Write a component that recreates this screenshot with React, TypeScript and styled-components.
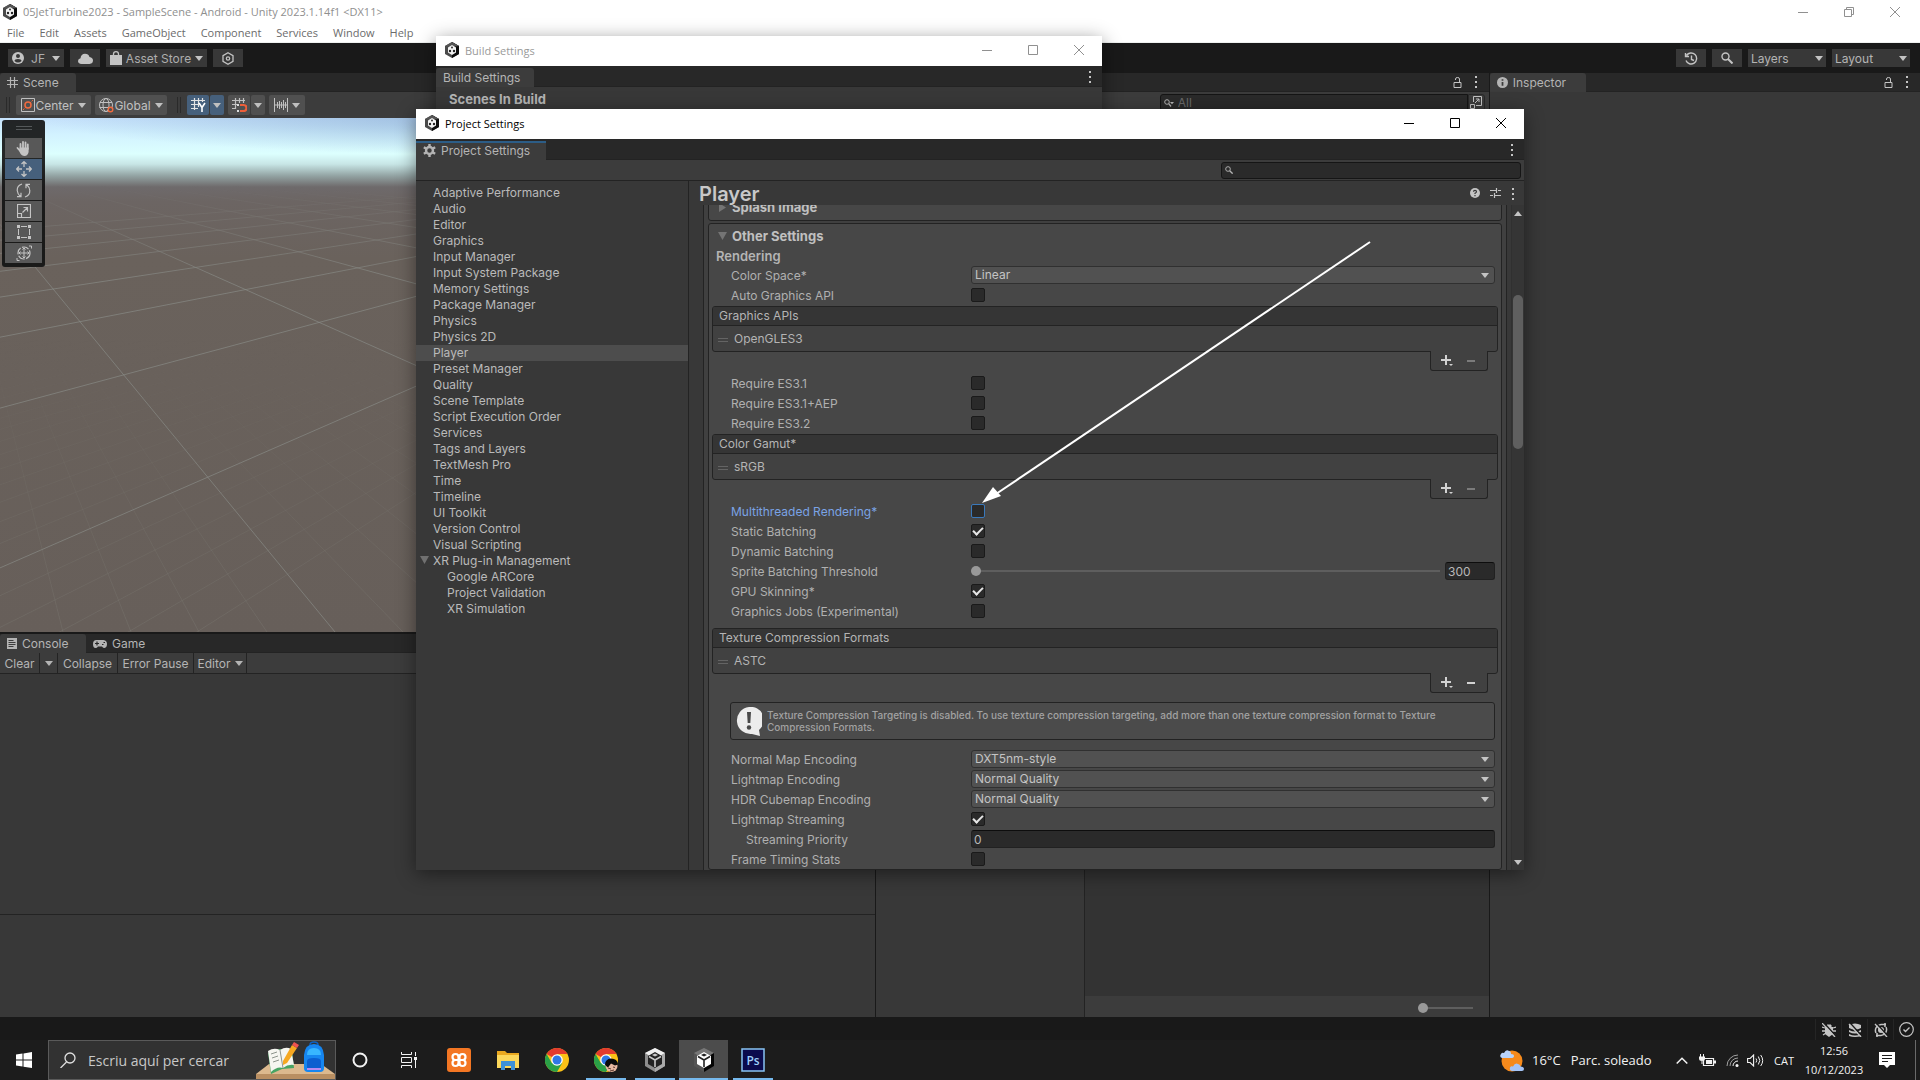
import React, { useId } from "react";
import styled, { createGlobalStyle, css } from "styled-components";

const ui = `Inter, Roboto, sans-serif`;
const win = `"Segoe UI", "Open Sans", "Noto Sans", sans-serif`;

const Global = createGlobalStyle`
  * { box-sizing: border-box; }
  html, body, #root { height: 100%; margin: 0; }
  body { overflow: hidden; background: #191919; font-family: ${ui}; font-size: 12px; color: #b4b4b4; }
  button, input, select { font: inherit; color: inherit; margin: 0; }
  button { border: 0; padding: 0; background: none; }
  ul, h1, h2, h3, p { margin: 0; padding: 0; font-size: inherit; font-weight: inherit; list-style: none; }
  svg { display: block; flex: none; }
`;

/* ---------- icons ---------- */

type IconProps = { w?: number; h?: number; box?: string; children: React.ReactNode };
const Svg = ({ w = 16, h = w, box, children }: IconProps) => (
  <svg width={w} height={h} viewBox={box ?? `0 0 ${w} ${h}`} fill="none" stroke="currentColor" aria-hidden="true">
    {children}
  </svg>
);

const Caret = ({ w = 8 }: { w?: number }) => (
  <Svg w={w} h={5} box="0 0 8 5"><path d="M0 0h8L4 5z" fill="currentColor" stroke="none" /></Svg>
);

const UnityBadge = () => (
  <Svg w={14} h={16} box="0 0 14 16">
    <path d="M7 0l7 4v8l-7 4-7-4V4z" fill="#4a4a4a" stroke="none" />
    <path d="M7 0l7 4v8l-7 4z" fill="#0c0c0c" stroke="none" />
    <path d="M7 0l7 4-7 1-7-1z" fill="#555" stroke="none" />
    <path d="M7 3l4 2.400v5.200l-4 2.400-4-2.400V5.400z" fill="#f4f4f4" stroke="none" />
    <circle cx="7" cy="5.400" r="1" fill="#333" stroke="none" />
    <circle cx="5" cy="9" r="1.200" fill="#222" stroke="none" />
    <circle cx="9" cy="9" r="1.200" fill="#222" stroke="none" />
  </Svg>
);

const UnityTask = ({ bright }: { bright?: boolean }) => (
  <Svg w={22} h={24} box="0 0 22 24">
    <path d="M11 0l10 5v13l-10 6-10-6V5z" fill={bright ? "#555" : "#8e8e8e"} stroke="none" />
    <path d="M11 0l10 5-10 6L1 5z" fill={bright ? "#777" : "#f0f0f0"} stroke="none" />
    <path d="M11 11l10-6v13l-10 6z" fill={bright ? "#050505" : "#aaa"} stroke="none" />
    <path d="M11 4l7 4v8l-7 4-7-4V8z" fill={bright ? "#fff" : "#222"} stroke="none" />
    <path d="M11 12v7M11 12l6-3.500M11 12L5 8.500" stroke={bright ? "#222" : "#c8c8c8"} strokeWidth="1.600" />
    <path d="M8 7l3-1.600L14 7l-3 1.600z" fill={bright ? "#222" : "#c8c8c8"} stroke="none" />
  </Svg>
);

const MinIcon = () => <Svg w={10}><path d="M0 5.500h10" /></Svg>;
const MaxIcon = () => <Svg w={10}><path d="M.5.5h9v9h-9z" /></Svg>;
const RestoreIcon = () => <Svg w={10}><path d="M.5 2.500h7v7h-7zM2.500 2.500v-2h7v7h-2" /></Svg>;
const CloseIcon = () => <Svg w={10}><path d="M0 0l10 10M10 0L0 10" /></Svg>;

const Kebab = () => (
  <Svg w={4} h={12}><path d="M1 0h2v2H1zM1 5h2v2H1zM1 10h2v2H1z" fill="currentColor" stroke="none" /></Svg>
);
const LockIcon = () => <Svg w={9} h={11}><path d="M1 5.500h7v5H1zM2.500 3V2Q2.500.5 4.500.5T6.500 2v3.500" /></Svg>;
const SearchIcon = ({ w = 8 }: { w?: number }) => (
  <Svg w={w} box="0 0 12 12"><circle cx="4.500" cy="4.500" r="3.500" strokeWidth="1.400" /><path d="M7 7l4.500 4.500" strokeWidth="2" /></Svg>
);
const SearchMenuIcon = () => (
  <Svg w={10} h={8}><circle cx="3" cy="3" r="2.300" /><path d="M4.700 4.700L7 7.500" strokeWidth="1.300" /><path d="M6 3h4L8 5.200z" fill="currentColor" stroke="none" /></Svg>
);
const UserIcon = () => (
  <Svg w={12}>
    <circle cx="6" cy="6" r="6" fill="currentColor" stroke="none" />
    <circle cx="6" cy="4" r="2" fill="#383838" stroke="none" />
    <path d="M2.500 9Q2.500 7 6 7t3.500 2Q8 10.500 6 10.500T2.500 9z" fill="#383838" stroke="none" />
  </Svg>
);
const CloudIcon = () => (
  <Svg w={15} h={11}><path d="M3.500 11Q0 10.500 0 8q0-2.200 2.500-2.800Q3 1 7 .8q3.500 0 4.500 3.200 3.500.5 3.500 3.500T11.500 11z" fill="currentColor" stroke="none" /></Svg>
);
const BagIcon = () => (
  <Svg w={12} h={14}><path d="M0 4h12v10H0z" fill="currentColor" stroke="none" /><path d="M3.500 6V3Q3.500.7 6 .7T8.500 3v3" strokeWidth="1.300" /></Svg>
);
const HexIcon = () => (
  <Svg w={12} h={13}><path d="M6 .8l5 2.800v5.800l-5 2.800-5-2.800V3.600z" strokeWidth="1.300" /><circle cx="6" cy="6.500" r="1.700" strokeWidth="1.200" /></Svg>
);
const HistoryIcon = () => (
  <Svg w={14} h={13}><path d="M2.500 3.500A5.500 5.500 0 1 1 2 8.500M1.500 1v3.500H5M7.500 3.500v4l2.500 1" strokeWidth="1.400" /></Svg>
);
const HashIcon = () => (
  <Svg w={11}><path d="M3.500 0v11M7.500 0v11M0 3.500h11M0 7.500h11" strokeWidth="1.200" /></Svg>
);
const PivotIcon = () => (
  <Svg w={14}><path d="M.5.5h13v13H.5z" /><circle cx="7" cy="7" r="3" stroke="#f26b3f" strokeWidth="1.500" /><path d="M2 12l3-3M9 5l3-3" stroke="#f26b3f" strokeDasharray="2 1" /></Svg>
);
const GlobeIcon = () => (
  <Svg w={15}><circle cx="7" cy="7" r="6.500" /><ellipse cx="7" cy="7" rx="3" ry="6.500" /><path d="M1 4.500h12M.5 9.500h10" /><circle cx="11.500" cy="11.500" r="2.300" fill="#505050" stroke="#f26b3f" strokeWidth="1.400" /></Svg>
);
const GridYIcon = () => (
  <Svg w={15} h={14}><path d="M3.500 0v12M7.500 0v9M11.500 0v4M0 2.500h14M0 6.500h8M0 10.500h7" stroke="#e4e4e4" strokeWidth="1.200" /><path d="M8 5l3 4.500L14 5M11 9.500V14" stroke="#fff" strokeWidth="1.600" /></Svg>
);
const SnapIcon = () => (
  <Svg w={15} h={14}><path d="M3.500 0v11M7.500 0v5M11.500 0v5M0 2.500h13M0 6.500h5M0 10.500h4" strokeWidth="1.200" /><path d="M8 7h3.500a2.500 2.500 0 0 1 0 6H8" stroke="#ee5f3a" strokeWidth="2.200" /><path d="M6 6v2M6 12v2" stroke="#ddd" strokeWidth="2" /></Svg>
);
const IncrementIcon = () => (
  <Svg w={14} h={14}><path d="M.5 0v14M13.500 0v14M3.500 4v6M5.500 3v8M7.500 4v6M9.500 2v10M11.500 4v6M1 7h12" /></Svg>
);
const InfoIcon = () => (
  <Svg w={11} box="0 0 10 10"><circle cx="5" cy="5" r="5" fill="currentColor" stroke="none" /><path d="M5 2v1.500M5 4.500V8" stroke="#3c3c3c" strokeWidth="1.600" /></Svg>
);
const HelpIcon = () => (
  <Svg w={10}><circle cx="5" cy="5" r="5" fill="currentColor" stroke="none" /><path d="M3.500 3.800Q3.500 2.400 5 2.400t1.500 1.400Q6.500 4.600 5 5.200v.8M5 7v1.200" stroke="#383838" strokeWidth="1.200" /></Svg>
);
const PresetIcon = () => (
  <Svg w={11} h={10}><path d="M0 2.500h6M8 2.500h3M6.500 0v5M0 7.500h3M5 7.500h6M4.500 5v5" strokeWidth="1.200" /></Svg>
);
const GearIcon = () => (
  <Svg w={13} box="0 0 14 14">
    <circle cx="7" cy="7" r="3.700" strokeWidth="2.600" />
    <path d="M7 0v3M7 11v3M.9 3.500l2.600 1.500M10.500 9l2.600 1.500M.9 10.500L3.500 9M10.500 5l2.600-1.500" strokeWidth="2.600" />
  </Svg>
);
const ConsoleIcon = () => (
  <Svg w={10} h={11}><path d="M0 0h10v11H0z" fill="currentColor" stroke="none" /><path d="M1.500 2.500h5M1.500 4.500h7M1.500 6.500h7M1.500 8.500h5" stroke="#3c3c3c" /></Svg>
);
const GamepadIcon = () => (
  <Svg w={14} h={8}><path d="M3.500 0h7Q14 .5 14 4t-2.500 4Q10 8 9 6.500H5Q4 8 2.500 8 0 8 0 4T3.500 0z" fill="currentColor" stroke="none" /><path d="M2 3.500h4M4 1.500v4M9 4.500h1.500M10.500 2.500H12" stroke="#282828" strokeWidth="1.200" /></Svg>
);
const PopOutIcon = () => <Svg w={12} h={13}><path d="M3.500 6V.5h8v9H6M.5 8.500h4v4h-4zM5 7l4-4M6 3h3v3" /></Svg>;

const HandIcon = () => (
  <Svg w={15}>
    <path d="M4.500 8V3M7 7V1M9.500 7V1.500M11.800 8V3.500M1.500 7L5 11" strokeWidth="1.800" strokeLinecap="round" />
    <path d="M3.600 6.500h9V11q-1 4-4 4-3.500 0-5-4z" fill="currentColor" stroke="none" />
  </Svg>
);
const MoveIcon = () => (
  <Svg w={16}><path d="M8 6V1M8 15v-5M6 8H1M15 8h-5M5.500 3L8 .7 10.500 3M5.500 13L8 15.300l2.500-2.300M3 5.500L.7 8 3 10.500M13 5.500L15.300 8 13 10.500" strokeWidth="1.300" /></Svg>
);
const RotateIcon = () => (
  <Svg w={15}><path d="M6 1Q1 2.500 1.200 7.500 1.500 11 4.500 13.500M1 13.700h4v-4M9 14q5-1.500 4.800-6.500Q13.500 4 10.500 1.500M14 1.300h-4v4" strokeWidth="1.200" /></Svg>
);
const ScaleIcon = () => <Svg w={14}><path d="M.5.5h13v13H.5zM.5 9.500h4v4M5.500 8.500L10.500 3.500M6.500 3.500h4v4" strokeWidth="1.200" /></Svg>;
const RectIcon = () => (
  <Svg w={14}><path d="M4 1.500h6M4 12.500h6M1.500 4v6M12.500 4v6" /><path d="M0 0h3v3H0zM11 0h3v3h-3zM0 11h3v3H0zM11 11h3v3h-3z" fill="currentColor" stroke="none" /></Svg>
);
const TransformIcon = () => (
  <Svg w={16}><circle cx="8" cy="8" r="6" strokeDasharray="7 1.500" strokeWidth="1.200" /><path d="M8 3v10M3 8h10M6.500 4.500L8 3l1.500 1.500M6.500 11.500L8 13l1.500-1.500M4.500 6.500L3 8l1.500 1.500M11.500 6.500L13 8l-1.500 1.500M13 1h2.500v2.500M1 13v2.500h2.500" /></Svg>
);

const NoticeIcon = () => (
  <Svg w={26} h={29}>
    <path d="M13 0a13 13 0 1 0 3 27l8 2-1-6A13 13 0 0 0 13 0z" fill="#ececec" stroke="none" />
    <path d="M11 5h4l-.7 11h-2.600z" fill="#484848" stroke="none" /><circle cx="13" cy="20.500" r="2.200" fill="#484848" stroke="none" />
  </Svg>
);
const PlusIcon = () => (
  <Svg w={12} h={11}><path d="M0 5h10M5 0v10" strokeWidth="2" /><path d="M8 9h4l-2 2z" fill="currentColor" stroke="none" /></Svg>
);
const MinusIcon = () => <Svg w={8} h={10}><path d="M0 5h8" strokeWidth="2" /></Svg>;

/* ---------- host application frame ---------- */

const Desktop = styled.div`
  position: relative;
  display: flex;
  flex-direction: column;
  height: 100vh;
  overflow: hidden;
`;

const TitleRow = styled.header`
  display: flex;
  align-items: center;
  height: 24px;
  padding: 0 2px 1px 3px;
  gap: 6px;
  background: #fff;
  color: #8f8f8f;
  font: 11px ${win};
`;

const WindowButtons = styled.div<{ $tone: string }>`
  display: flex;
  align-self: stretch;
  margin-left: auto;
  color: ${(p) => p.$tone};
  button { display: grid; place-items: center; width: 46px; }
`;

const MenuRow = styled.nav`
  display: flex;
  align-items: center;
  gap: 15px;
  height: 19px;
  padding: 0 7px 2px;
  background: #fff;
  border-bottom: 1px solid #eef0ef;
  color: #6b6b6b;
  font: 11px ${win};
`;

const MainBar = styled.div`
  display: flex;
  align-items: center;
  gap: 6px;
  height: 30px;
  padding: 0 10px 0 8px;
  background: #191919;
`;

const BarButton = styled.button<{ $w: number }>`
  display: flex;
  align-items: center;
  justify-content: center;
  gap: 4px;
  width: ${(p) => p.$w}px;
  height: 18px;
  background: #383838;
  color: #c4c4c4;
  span { color: #adadad; }
`;

const Spacer = styled.div`flex: 1;`;

const BarSelectBox = styled.label`
  position: relative;
  display: flex;
  align-items: center;
  width: 78px;
  height: 18px;
  background: #383838;
  color: #b4b4b4;
  select { appearance: none; width: 100%; padding: 0 3px; border: 0; background: none; }
  svg { position: absolute; right: 3px; top: 7px; color: #c4c4c4; pointer-events: none; }
`;

const Workspace = styled.main`
  flex: 1;
  display: grid;
  grid-template-columns: 875fr 612fr 430fr;
  gap: 1px;
  min-height: 0;
  background: #191919;
`;

const Column = styled.section`
  display: flex;
  flex-direction: column;
  min-width: 0;
  min-height: 0;
  background: #383838;
`;

const TabStrip = styled.div`
  display: flex;
  align-items: stretch;
  flex: none;
  height: 19px;
  background: #282828;
  border-bottom: 1px solid #232323;
`;

const Tab = styled.button<{ $active?: boolean; $w?: number; $focus?: boolean }>`
  display: flex;
  align-items: center;
  gap: 5px;
  width: ${(p) => (p.$w ? `${p.$w}px` : "auto")};
  height: 19px;
  padding: 0 7px;
  border-radius: 3px 3px 0 0;
  color: #b4b4b4;
  ${(p) => p.$active && css`background: #3c3c3c;`}
  ${(p) => p.$focus && css`border-radius: 0; background: linear-gradient(#2c5d87, #2c5d87) top / 100% 2px no-repeat #3c3c3c;`}
`;

const StripTools = styled.div`
  display: flex;
  align-items: center;
  gap: 12px;
  margin-left: auto;
  padding-right: 11px;
  color: #c4c4c4;
`;

/* ---------- scene ---------- */

const SceneToolbar = styled.div`
  display: flex;
  align-items: center;
  gap: 4px;
  flex: none;
  height: 26px;
  padding: 0 6px;
  background: #3c3c3c;
`;

const Grip = styled.span<{ $ml?: number }>`
  width: 4px;
  height: 16px;
  margin: 0 2px 0 ${(p) => p.$ml ?? 0}px;
  border: solid #2a2a2a;
  border-width: 0 1px;
`;

const Joined = styled.div`display: flex; gap: 1px;`;

const SceneButton = styled.button<{ $on?: boolean; $w: number }>`
  display: flex;
  align-items: center;
  justify-content: center;
  width: ${(p) => p.$w}px;
  height: 20px;
  border-radius: 2px;
  background: ${(p) => (p.$on ? "#46607c" : "#505050")};
  color: #c0c0c0;
  svg:last-child:not(:first-child) { margin-left: 4px; }
`;

const SceneView = styled.div`
  position: relative;
  flex: none;
  height: 514px;
  overflow: hidden;
  background:
    radial-gradient(ellipse 520px 38px at 560px 0, rgba(110, 145, 190, 0.55), rgba(110, 145, 190, 0)) no-repeat,
    linear-gradient(#c6e2fc 0, #d2f2ff 16px, #dcfffe 36px, #c8e6e6 46px, #92a2a2 58px, #6e6a6b 69px, #6c6563 84px, #6a625c 140px, #675f5a 100%);
`;

const ToolPalette = styled.div`
  position: absolute;
  left: 2px;
  top: 2px;
  display: flex;
  flex-direction: column;
  gap: 1px;
  width: 43px;
  padding: 0 3px 4px;
  border-radius: 3px;
  background: rgba(20, 20, 20, 0.92);
`;

const PaletteGrip = styled.div`
  height: 4px;
  width: 16px;
  margin: 6px auto 7px;
  border: solid #54585a;
  border-width: 1px 0;
`;

const ToolButton = styled.button<{ $on?: boolean }>`
  display: grid;
  place-items: center;
  height: 20px;
  background: ${(p) => (p.$on ? "#46607c" : "#585858")};
  color: #c4c4c4;
`;

const FloorGrid = () => {
  const lines: { d: string; major: boolean }[] = [];
  for (let k = -5; k <= 70; k++) {
    const y0 = 35 + 1 / (0.00241 + k * 0.000151);
    lines.push({ d: `M0 ${y0.toFixed(1)}L950 35`, major: k % 10 === 0 });
  }
  for (let k = -6; k <= 70; k++) {
    lines.push({ d: `M${335 + 68 * k} 514L-57 37`, major: k % 10 === 0 });
  }
  return (
    <svg width="875" height="514" viewBox="0 0 875 514" fill="none" aria-hidden="true">
      <defs>
        <linearGradient id="nearFade" x1="0" y1="220" x2="0" y2="514" gradientUnits="userSpaceOnUse">
          <stop offset="0" stopColor="#000" /><stop offset="1" stopColor="#fff" />
        </linearGradient>
        <linearGradient id="farFade" x1="0" y1="68" x2="0" y2="160" gradientUnits="userSpaceOnUse">
          <stop offset="0" stopColor="#000" /><stop offset="1" stopColor="#fff" />
        </linearGradient>
        <mask id="nearMask" maskUnits="userSpaceOnUse" x="0" y="0" width="875" height="514"><path d="M0 0h875v514H0z" fill="url(#nearFade)" /></mask>
        <mask id="farMask" maskUnits="userSpaceOnUse" x="0" y="0" width="875" height="514"><path d="M0 0h875v514H0z" fill="url(#farFade)" /></mask>
      </defs>
      <g mask="url(#nearMask)" stroke="#84847f" strokeOpacity="0.28">
        {lines.filter((l) => !l.major).map((l) => <path key={l.d} d={l.d} />)}
      </g>
      <g mask="url(#farMask)" stroke="#8a8d89" strokeOpacity="0.65">
        {lines.filter((l) => l.major).map((l) => <path key={l.d} d={l.d} />)}
      </g>
    </svg>
  );
};

/* ---------- console ---------- */

const ConsolePanel = styled.div`
  display: flex;
  flex-direction: column;
  flex: 1;
  padding-top: 2px;
  background: #191919;
`;

const ConsoleToolbar = styled.div`
  display: flex;
  height: 21px;
  background: #3c3c3c;
  border-bottom: 1px solid #232323;
`;

const ConsoleButton = styled.button<{ $w: number }>`
  display: flex;
  align-items: center;
  justify-content: center;
  gap: 4px;
  width: ${(p) => p.$w}px;
  border-right: 1px solid #232323;
`;

const ConsoleBody = styled.div`flex: 1; background: #383838;`;
const ConsoleDetail = styled.div`height: 103px; border-top: 1px solid #232323; background: #383838;`;

/* ---------- project browser ---------- */

const BrowserToolbar = styled.div`
  display: flex;
  align-items: center;
  justify-content: flex-end;
  height: 21px;
  padding: 0 4px;
  background: #3c3c3c;
`;

const AssetSearch = styled.label`
  display: flex;
  align-items: center;
  gap: 4px;
  width: 308px;
  height: 17px;
  padding-left: 3px;
  border: 1px solid #151515;
  border-radius: 3px 0 0 3px;
  background: #2a2a2a;
  color: #b4b4b4;
  input { width: 100%; padding: 0; border: 0; outline: 0; background: none; }
  input::placeholder { color: #6a6a6a; opacity: 1; }
`;

const PopOut = styled.button`
  display: grid;
  place-items: center;
  width: 17px;
  height: 17px;
  border: 1px solid #282828;
  border-radius: 0 3px 3px 0;
  color: #c4c4c4;
`;

const BrowserSplit = styled.div`
  flex: 1;
  display: grid;
  grid-template-columns: 207fr 404fr;
  gap: 1px;
  background: #232323;
`;

const FolderPane = styled.div`background: #383838;`;
const AssetPane = styled.div`display: flex; flex-direction: column; background: #333;`;
const ZoomBar = styled.div`
  display: flex;
  justify-content: flex-end;
  align-items: center;
  height: 21px;
  margin-top: auto;
  padding: 2px 16px 0 0;
  background: #3c3c3c;
`;

const Range = styled.input.attrs({ type: "range" })`
  appearance: none;
  display: block;
  min-width: 0;
  height: 10px;
  background: linear-gradient(#5e5e5e, #5e5e5e) 0 4px / 100% 2px no-repeat;
  &::-webkit-slider-thumb { appearance: none; width: 10px; height: 10px; border-radius: 50%; background: #999; }
`;

const StatusBar = styled.footer`
  display: flex;
  justify-content: flex-end;
  height: 23px;
  padding: 2px 1px 0 0;
  background: #191919;
  color: #c4c4c4;
  button { display: grid; place-items: center; width: 26px; border-left: 1px solid #252525; }
`;

/* ---------- floating windows ---------- */

const Floating = styled.section<{ $x: number; $y: number; $w: number; $h: number }>`
  position: absolute;
  left: ${(p) => p.$x}px;
  top: ${(p) => p.$y}px;
  display: flex;
  flex-direction: column;
  width: ${(p) => p.$w}px;
  height: ${(p) => p.$h}px;
  background: #383838;
  box-shadow: 0 4px 18px rgba(0, 0, 0, 0.45);
`;

const FloatTitle = styled.header<{ $dim?: boolean }>`
  display: flex;
  align-items: center;
  flex: none;
  gap: 6px;
  height: 30px;
  padding: 0 0 2px 9px;
  background: #fff;
  color: ${(p) => (p.$dim ? "#9a9a9a" : "#000")};
  font: 11px ${win};
`;

const FloatStrip = styled(TabStrip)`
  height: 21px;
  padding-top: 2px;
  div { padding: 0 10px 1px 0; }
`;

const BuildHeading = styled.h2`padding: 4px 13px; font-weight: 700; font-size: 13px;`;

const SearchRow = styled.div`
  display: flex;
  align-items: center;
  justify-content: flex-end;
  flex: none;
  height: 21px;
  padding-right: 3px;
  background: #3c3c3c;
  border-bottom: 1px solid #232323;
`;

const SettingsSearch = styled(AssetSearch)`
  width: 300px;
  border-radius: 3px;
`;

const Split = styled.div`
  flex: 1;
  display: grid;
  grid-template-columns: 273px 1fr;
  min-height: 0;
`;

const SideList = styled.ul`
  && { padding-top: 4px; }
  border-right: 1px solid #232323;
`;

const SideItem = styled.li<{ $on?: boolean }>`
  height: 16px;
  background: ${(p) => (p.$on ? "#4d4d4d" : "none")};
`;

const SideLink = styled.button<{ $nested?: boolean }>`
  display: flex;
  align-items: center;
  width: 100%;
  height: 16px;
  padding: 0 0 2px ${(p) => (p.$nested ? 31 : 17)}px;
  color: #bababa;
  svg { margin: 0 4px 0 -13px; color: #707070; }
`;

const Pane = styled.div`
  display: flex;
  flex-direction: column;
  min-width: 0;
  min-height: 0;
`;

const PaneHeader = styled.header`
  display: flex;
  align-items: center;
  flex: none;
  height: 24px;
  padding: 2px 9px 0 10px;
  h1 { flex: 1; font-size: 20px; line-height: 24px; font-weight: 600; color: #c8c8c8; }
  div { display: flex; gap: 10px; color: #c4c4c4; }
`;

const ScrollArea = styled.div`
  flex: 1;
  display: flex;
  min-height: 0;
  padding-left: 14px;
  overflow: hidden;
`;

const Sheet = styled.div`
  flex: 1;
  align-self: flex-start;
  padding: 0 4px;
  border: solid #232323;
  border-width: 0 1px;
  background: #404040;
`;

const Section = styled.section<{ $scrolled?: boolean }>`
  margin: ${(p) => (p.$scrolled ? "-12px 0 2px" : "0")};
  border: 1px solid #232323;
  border-radius: 3px;
  background: #474747;
`;

const Foldout = styled.button<{ $tall?: boolean }>`
  display: flex;
  align-items: center;
  gap: 5px;
  width: 100%;
  height: ${(p) => (p.$tall ? 26 : 24)}px;
  padding-left: 9px;
  font-size: 13px;
  font-weight: 700;
  color: #c0c0c0;
  svg { color: #747474; }
`;

const GroupTitle = styled.h3`
  && { font-size: 13px; font-weight: 600; }
  height: 17px;
  padding-left: 7px;
  line-height: 17px;
`;

const Row = styled.div<{ $nested?: boolean; $hot?: boolean }>`
  display: grid;
  grid-template-columns: 240px 1fr;
  align-items: center;
  height: 20px;
  padding: 0 6px 0 22px;
  color: ${(p) => (p.$hot ? "#7aa3e5" : "#b0b0b0")};
  > label { padding-left: ${(p) => (p.$nested ? 15 : 0)}px; }
`;

const Check = styled.input.attrs({ type: "checkbox" })<{ $hot?: boolean }>`
  appearance: none;
  display: grid;
  place-items: center;
  width: 14px;
  height: 14px;
  border: 1px solid ${(p) => (p.$hot ? "#3a79bb" : "#1a1a1a")};
  border-radius: 2px;
  background: #2a2a2a;
  &:checked::after {
    content: "";
    width: 8px;
    height: 4px;
    margin-bottom: 3px;
    border: solid #e6e6e6;
    border-width: 0 0 2px 2px;
    transform: rotate(-45deg);
  }
`;

const SelectBox = styled.div`
  position: relative;
  display: flex;
  select {
    appearance: none;
    width: 100%;
    height: 18px;
    padding: 0 3px 1px;
    border: 1px solid #303030;
    border-radius: 3px;
    background: #515151;
    color: #c4c4c4;
  }
  svg { position: absolute; right: 6px; top: 7px; color: #c4c4c4; pointer-events: none; }
`;

const NumberBox = styled.input`
  width: 100%;
  height: 18px;
  padding: 0 2px;
  border: 1px solid #212121;
  border-top-color: #0d0d0d;
  border-radius: 3px;
  background: #2a2a2a;
  color: #b8b8b8;
`;

const SliderPair = styled.div`
  display: grid;
  grid-template-columns: 1fr 50px;
  align-items: center;
  gap: 5px;
`;

const ListWrap = styled.div<{ $gap?: number }>`
  padding: ${(p) => p.$gap ?? 1}px 3px 2px;
`;

const ListFrame = styled.div`
  border: 1px solid #232323;
  border-radius: 3px;
  background: #414141;
  color: #b4b4b4;
  h3 { height: 19px; padding: 0 6px; line-height: 18px; background: #353535; border-bottom: 1px solid #232323; border-radius: 2px 2px 0 0; }
  li { display: flex; align-items: center; gap: 6px; height: 25px; padding-left: 5px; }
`;

const Handle = styled.span`
  width: 10px;
  height: 4px;
  margin-top: 2px;
  border: solid #646464;
  border-width: 1px 0;
`;

const ListFooter = styled.div`
  position: relative;
  display: flex;
  align-items: center;
  justify-content: center;
  gap: 14px;
  width: 58px;
  height: 20px;
  margin: -1px 10px 0 auto;
  padding-right: 2px;
  border: 1px solid #232323;
  border-top: 0;
  border-radius: 0 0 3px 3px;
  background: #414141;
  color: #d2d2d2;
  button:disabled { color: #7b7b7b; }
`;

const Notice = styled.p`
  && { margin: 7px 6px 9px 21px; padding: 0 40px 0 5px; }
  display: flex;
  align-items: center;
  gap: 5px;
  height: 38px;
  border: 1px solid #232323;
  border-radius: 3px;
  background: #4b4b4b;
  color: #a2a2a2;
  font-size: 10px;
  line-height: 12px;
  span { font-weight: 500; }
`;

const ScrollBar = styled.div`
  display: flex;
  flex-direction: column;
  width: 13px;
  margin-left: 4px;
  border-left: 1px solid #303030;
  background: #353535;
  color: #c4c4c4;
  button { display: grid; place-items: center; height: 16px; }
`;

const ScrollTrack = styled.div`
  flex: 1;
  padding: 74px 1px 0;
  div { height: 154px; border-radius: 5px; background: #5f5f5f; }
`;

const Pointer = styled.svg`
  position: absolute;
  left: 980px;
  top: 238px;
  pointer-events: none;
`;

/* ---------- taskbar ---------- */

const Taskbar = styled.footer`
  display: flex;
  align-items: stretch;
  flex: none;
  height: 40px;
  background: #1c1c1c;
  color: #f2f2f2;
  font-family: ${win};
`;

const StartButton = styled.button`
  display: grid;
  place-items: center;
  width: 48px;
`;

const TaskSearch = styled.label`
  display: flex;
  align-items: center;
  gap: 12px;
  width: 288px;
  padding-left: 11px;
  border: 1px solid #5a5a5a;
  background: #323232;
  color: #e0e0e0;
  input { flex: 1; min-width: 0; border: 0; padding: 0; background: none; font: 14px ${win}; }
  input::placeholder { color: #c8c8c8; opacity: 1; }
  svg:last-child { align-self: flex-end; }
`;

const TaskButton = styled.button<{ $w?: number; $open?: boolean; $active?: boolean }>`
  display: grid;
  place-items: center;
  width: ${(p) => p.$w ?? 49}px;
  background:
    ${(p) => (p.$open ? "linear-gradient(#76b9ed, #76b9ed) center bottom / 40px 2px no-repeat," : "")}
    ${(p) => (p.$active ? "linear-gradient(#76b9ed, #76b9ed) center bottom / 100% 2px no-repeat, linear-gradient(#4c4c4c, #4c4c4c)" : "linear-gradient(#1c1c1c, #1c1c1c)")};
`;

const Tray = styled.div`
  display: flex;
  align-items: center;
  margin-left: auto;
`;

const Weather = styled.button`
  display: flex;
  align-items: center;
  gap: 8px;
  width: 170px;
  font-size: 13px;
  span { margin-right: 2px; white-space: nowrap; }
`;

const TrayItem = styled.button<{ $w: number }>`
  display: grid;
  place-items: center;
  width: ${(p) => p.$w}px;
  height: 40px;
  font-size: 11px;
  line-height: 19px;
`;

const ShowDesktop = styled.button`
  width: 5px;
  height: 40px;
  margin-left: 8px;
  border-left: 1px solid #6a6a6a;
`;

const ChromeIcon = ({ face }: { face?: boolean }) => (
  <Svg w={24}>
    <circle cx="12" cy="12" r="12" fill="#fbc116" stroke="none" />
    <path d="M12 12L1.600 6A12 12 0 0 1 22.400 6H12z" fill="#e33b2e" stroke="none" />
    <path d="M1.600 6A12 12 0 0 0 12 24l5.200-9L12 12 6.800 15z" fill="#2aa147" stroke="none" />
    <circle cx="12" cy="12" r="5.800" fill="#fff" stroke="none" />
    <circle cx="12" cy="12" r="4.500" fill="#2f78e6" stroke="none" />
    {face && (
      <>
        <circle cx="17.500" cy="18" r="6" fill="#e8b9a2" stroke="none" />
        <path d="M11 17q0-6 6-6.500 6.500 0 7 6l-3 1-4-2-3 4z" fill="#0a0a0a" stroke="none" />
        <path d="M14 20l3 1M19 19l2 .5M16 23l4-1" stroke="#5d3a30" />
      </>
    )}
  </Svg>
);

const StudyArt = () => (
  <Svg w={79} h={38}>
    <path d="M13 23h52l14 10v5H0v-5z" fill="#dcb98e" stroke="none" />
    <path d="M0 33h79v5H0z" fill="#b98f62" stroke="none" />
    <path d="M12 12l12-4 12 2 2 17-12 1-11 5z" fill="#47a463" stroke="none" />
    <path d="M12 10q6-4 12-1 6-4 11-1l3 16q-6-1-11 3-6-2-12 4z" fill="#f5f5f0" stroke="none" />
    <path d="M24 9l3 18M15 13l6-2M16 17l6-2M17 21l6-2" stroke="#8d948c" />
    <path d="M27 20L36 4l5 3-10 15-4 2z" fill="#f6a821" stroke="none" />
    <path d="M36 4l2-3 5 3-2 3z" fill="#ef5350" stroke="none" />
    <path d="M48 14Q49 3 58 3t10 11v13q0 4-4 4H52q-4 0-4-4z" fill="#1686f0" stroke="none" />
    <path d="M54 4q0-3 4-3t4 3" stroke="#0d62c4" strokeWidth="1.500" />
    <path d="M51 14q0-7 7-7t7 7z" fill="#38b6ff" stroke="none" />
    <path d="M51 20q0-3 7-3t7 3v7H51z" fill="#0b5fd0" stroke="none" />
    <path d="M51 28h14" stroke="#b58bf0" strokeWidth="2" />
  </Svg>
);

/* ---------- settings data ---------- */

const sideItems = [
  "Adaptive Performance", "Audio", "Editor", "Graphics", "Input Manager", "Input System Package",
  "Memory Settings", "Package Manager", "Physics", "Physics 2D", "Player", "Preset Manager", "Quality",
  "Scene Template", "Script Execution Order", "Services", "Tags and Layers", "TextMesh Pro", "Time",
  "Timeline", "UI Toolkit", "Version Control", "Visual Scripting",
];
const xrItems = ["Google ARCore", "Project Validation", "XR Simulation"];

const CheckRow = ({ label, on, hot }: { label: string; on?: boolean; hot?: boolean }) => {
  const id = useId();
  return (
    <Row $hot={hot}>
      <label htmlFor={id}>{label}</label>
      <Check id={id} defaultChecked={on} $hot={hot} />
    </Row>
  );
};

const SelectRow = ({ label, value }: { label: string; value: string }) => {
  const id = useId();
  return (
    <Row>
      <label htmlFor={id}>{label}</label>
      <SelectBox>
        <select id={id}><option>{value}</option></select>
        <Caret />
      </SelectBox>
    </Row>
  );
};

const ReorderList = ({ title, item, gap, removable }: { title: string; item: string; gap?: number; removable?: boolean }) => (
  <ListWrap $gap={gap}>
    <ListFrame>
      <h3>{title}</h3>
      <ul><li><Handle />{item}</li></ul>
    </ListFrame>
    <ListFooter>
      <button aria-label={`Add to ${title}`}><PlusIcon /></button>
      <button aria-label={`Remove from ${title}`} disabled={!removable}><MinusIcon /></button>
    </ListFooter>
  </ListWrap>
);

const Controls = ({ tone, restore }: { tone: string; restore?: boolean }) => (
  <WindowButtons $tone={tone}>
    <button aria-label="Minimize"><MinIcon /></button>
    <button aria-label="Maximize">{restore ? <RestoreIcon /> : <MaxIcon />}</button>
    <button aria-label="Close"><CloseIcon /></button>
  </WindowButtons>
);

const BarSelect = ({ name }: { name: string }) => (
  <BarSelectBox>
    <select aria-label={name}><option>{name}</option></select>
    <Caret />
  </BarSelectBox>
);

const BuildWindow = () => (
  <Floating $x={436} $y={36} $w={666} $h={120}>
    <FloatTitle $dim><UnityBadge />Build Settings<Controls tone="#909090" /></FloatTitle>
    <FloatStrip>
      <Tab $active $w={98}>Build Settings</Tab>
      <StripTools><Kebab /></StripTools>
    </FloatStrip>
    <BuildHeading>Scenes In Build</BuildHeading>
  </Floating>
);

const PlayerSettings = () => {
  const threshold = useId();
  const priority = useId();
  return (
    <Pane>
      <PaneHeader>
        <h1>Player</h1>
        <div><HelpIcon /><PresetIcon /><Kebab /></div>
      </PaneHeader>
      <ScrollArea>
        <Sheet>
          <Section $scrolled>
            <Foldout $tall>
              <Svg w={9} h={9}><path d="M1 0l7 4.500L1 9z" fill="currentColor" stroke="none" /></Svg>
              Splash Image
            </Foldout>
          </Section>
          <Section>
            <Foldout>
              <Svg w={9} h={8}><path d="M0 0h9L4.500 8z" fill="currentColor" stroke="none" /></Svg>
              Other Settings
            </Foldout>
            <GroupTitle>Rendering</GroupTitle>
            <SelectRow label="Color Space*" value="Linear" />
            <CheckRow label="Auto Graphics API" />
            <ReorderList title="Graphics APIs" item="OpenGLES3" />
            <CheckRow label="Require ES3.1" />
            <CheckRow label="Require ES3.1+AEP" />
            <CheckRow label="Require ES3.2" />
            <ReorderList title="Color Gamut*" item="sRGB" />
            <CheckRow label="Multithreaded Rendering*" hot />
            <CheckRow label="Static Batching" on />
            <CheckRow label="Dynamic Batching" />
            <Row>
              <label htmlFor={threshold}>Sprite Batching Threshold</label>
              <SliderPair>
                <Range id={threshold} min={300} max={8000} defaultValue={300} />
                <NumberBox aria-label="Sprite Batching Threshold value" defaultValue="300" />
              </SliderPair>
            </Row>
            <CheckRow label="GPU Skinning*" on />
            <CheckRow label="Graphics Jobs (Experimental)" />
            <ReorderList title="Texture Compression Formats" item="ASTC" gap={7} removable />
            <Notice>
              <NoticeIcon />
              <span>Texture Compression Targeting is disabled. To use texture compression targeting, add more than one texture compression format to Texture Compression Formats.</span>
            </Notice>
            <SelectRow label="Normal Map Encoding" value="DXT5nm-style" />
            <SelectRow label="Lightmap Encoding" value="Normal Quality" />
            <SelectRow label="HDR Cubemap Encoding" value="Normal Quality" />
            <CheckRow label="Lightmap Streaming" on />
            <Row $nested>
              <label htmlFor={priority}>Streaming Priority</label>
              <NumberBox id={priority} defaultValue="0" />
            </Row>
            <CheckRow label="Frame Timing Stats" />
          </Section>
        </Sheet>
        <ScrollBar>
          <button aria-label="Scroll up"><Svg w={8} h={5}><path d="M0 5h8L4 0z" fill="currentColor" stroke="none" /></Svg></button>
          <ScrollTrack><div /></ScrollTrack>
          <button aria-label="Scroll down"><Caret /></button>
        </ScrollBar>
      </ScrollArea>
    </Pane>
  );
};

const ProjectWindow = () => (
  <Floating $x={416} $y={109} $w={1108} $h={761}>
    <FloatTitle><UnityBadge />Project Settings<Controls tone="#000" /></FloatTitle>
    <FloatStrip>
      <Tab $active $focus $w={130}><GearIcon />Project Settings</Tab>
      <StripTools><Kebab /></StripTools>
    </FloatStrip>
    <SearchRow>
      <SettingsSearch><SearchIcon /><input aria-label="Search settings" /></SettingsSearch>
    </SearchRow>
    <Split>
      <SideList>
        {sideItems.map((name) => (
          <SideItem key={name} $on={name === "Player"}><SideLink>{name}</SideLink></SideItem>
        ))}
        <SideItem>
          <SideLink><Svg w={9} h={8}><path d="M0 0h9L4.500 8z" fill="currentColor" stroke="none" /></Svg>XR Plug-in Management</SideLink>
        </SideItem>
        {xrItems.map((name) => <SideItem key={name}><SideLink $nested>{name}</SideLink></SideItem>)}
      </SideList>
      <PlayerSettings />
    </Split>
  </Floating>
);

const EditorTray = () => (
  <StatusBar>
    <button aria-label="Debugger">
      <Svg w={14}><path d="M3 4h8v7l-4 3-4-3z" fill="currentColor" stroke="none" /><path d="M5 4V2h4v2" fill="currentColor" /><path d="M0 4l3 1M0 8h3M1 12l3-2M14 4l-3 1M14 8h-3M13 12l-3-2" strokeWidth="1.300" /><path d="M2 0l12 13" stroke="#191919" strokeWidth="1.500" /><path d="M0 0l13 14" strokeWidth="1.300" /></Svg>
    </button>
    <button aria-label="Cache server">
      <Svg w={14}><path d="M1 2q6-3 12 0v3q-6 3-12 0zM1 7q6 3 12 0v2q-6 3-12 0zM1 11q6 3 12 0v2q-6 2-12 0z" fill="currentColor" stroke="none" /><path d="M3 1l11 12" stroke="#191919" strokeWidth="1.500" /><path d="M1 1l12 13" strokeWidth="1.300" /></Svg>
    </button>
    <button aria-label="Auto refresh">
      <Svg w={14}><path d="M2 10A6 6 0 0 1 7 1.500h5M12 4A6 6 0 0 1 7 12.500H2M11 0v4M3 10v4" strokeWidth="1.500" /><circle cx="7" cy="7" r="3" fill="currentColor" stroke="none" /><path d="M3 1l11 12" stroke="#191919" strokeWidth="1.500" /><path d="M1 1l12 13" strokeWidth="1.300" /></Svg>
    </button>
    <button aria-label="Progress">
      <Svg w={15}><circle cx="7.500" cy="7.500" r="6.800" strokeWidth="1.200" /><path d="M4.500 7.500l2 2 4-4" strokeWidth="1.400" /></Svg>
    </button>
  </StatusBar>
);

const WindowsTaskbar = () => (
  <Taskbar>
    <StartButton aria-label="Start">
      <Svg w={16}><path d="M0 2.500L6.500 1.600v6H0zM7.500 1.400L16 0v7.600H7.500zM0 8.500h6.500v6L0 13.600zM7.500 8.500H16V16l-8.500-1.300z" fill="#fff" stroke="none" /></Svg>
    </StartButton>
    <TaskSearch>
      <Svg w={16}><circle cx="10" cy="6" r="5" strokeWidth="1.300" /><path d="M6.500 10L.5 16" strokeWidth="1.300" /></Svg>
      <input aria-label="Search" placeholder="Escriu aquí per cercar" />
      <StudyArt />
    </TaskSearch>
    <TaskButton $w={48} aria-label="Cortana"><Svg w={16}><circle cx="8" cy="8" r="6.500" strokeWidth="2" /></Svg></TaskButton>
    <TaskButton $w={50} aria-label="Task view">
      <Svg w={16}><path d="M.5 0v2.500h10V0M.5 5.500h10v5H.5zM.5 16v-2.500h10V16M14.500 0v4M14.500 8v8" /><path d="M13 5h3v3h-3z" fill="currentColor" stroke="none" /></Svg>
    </TaskButton>
    <TaskButton aria-label="XAMPP">
      <Svg w={24}>
        <rect width="24" height="24" rx="3" fill="#f37623" stroke="none" />
        <path d="M11 12H8.500Q5.500 12 5.500 9T8.500 6t3 3v6q0 3-3 3t-3-3 3-3M13 12h2.500q3 0 3-3t-3-3-3 3v6q0 3 3 3t3-3-3-3" stroke="#fff" strokeWidth="2.200" />
      </Svg>
    </TaskButton>
    <TaskButton aria-label="File explorer">
      <Svg w={22} h={19}><path d="M0 0h8l2 2h12v15H0z" fill="#e9a820" stroke="none" /><path d="M0 4h22v13H0z" fill="#fbd75b" stroke="none" /><path d="M4 10h14v9h-4v-4H8v4H4z" fill="#3d91d8" stroke="none" /></Svg>
    </TaskButton>
    <TaskButton aria-label="Chrome"><ChromeIcon /></TaskButton>
    <TaskButton aria-label="Chrome profile" $open><ChromeIcon face /></TaskButton>
    <TaskButton aria-label="Unity Hub" $open><UnityTask /></TaskButton>
    <TaskButton aria-label="Unity" $active><UnityTask bright /></TaskButton>
    <TaskButton aria-label="Photoshop" $open>
      <svg width="24" height="24" viewBox="0 0 24 24" aria-hidden="true">
        <rect x="1" y="1" width="22" height="22" fill="#0b0b4d" stroke="#88c4f4" strokeWidth="1.500" />
        <text x="12" y="16.500" textAnchor="middle" fontSize="12" fontWeight="600" fill="#9fd0fa" fontFamily="Open Sans, sans-serif">Ps</text>
      </svg>
    </TaskButton>
    <Tray>
      <Weather>
        <Svg w={24} h={23}>
          <circle cx="12" cy="12" r="10.500" fill="#f68a1c" stroke="none" />
          <path d="M2 9q-3-1-1-4 1-2 3-1 2-4 5-2 2 0 2 3 3 0 3 2t-3 2z" fill="#b9d3fb" stroke="none" />
          <path d="M12 22q-3-1-2-3.500 1-2 3-1 2-4 5-2.500 2 0 2.500 2.500 3.500 0 3.500 2.500t-3 2z" fill="#a5c4f7" stroke="none" />
        </Svg>
        <span>16°C</span><span>Parc. soleado</span>
      </Weather>
      <TrayItem $w={24} aria-label="Hidden icons"><Svg w={12} h={7}><path d="M.7 6.500L6 1.200l5.300 5.300" strokeWidth="1.500" /></Svg></TrayItem>
      <TrayItem $w={26} aria-label="Battery">
        <Svg w={17} h={13}><path d="M4.500 4.500h10v7h-10z" strokeWidth="1.200" /><path d="M7 6h6v4H7zM15 6.500h2v3h-2zM0 2.500h6v2Q6 7 3 7T0 4.500zM1 0h1v3H1zM4 0h1v3H4zM2.500 6h1v4h-1z" fill="currentColor" stroke="none" /></Svg>
      </TrayItem>
      <TrayItem $w={24} aria-label="Network">
        <Svg w={13}><g stroke="#a0a0a0"><path d="M1 12A11 11 0 0 1 12 1" /><path d="M4 12a8 8 0 0 1 8-8" /></g><path d="M7 12a5 5 0 0 1 5-5" /><circle cx="11" cy="11.500" r="1.500" fill="currentColor" stroke="none" /></Svg>
      </TrayItem>
      <TrayItem $w={22} aria-label="Volume">
        <Svg w={17} h={13}><path d="M.6 4.500h2.500l3.500-3.500v11L3.100 8.500H.6z" strokeWidth="1.100" /><path d="M9 4.500q1.500 2 0 4M11.300 2.500q3 4 0 8M13.700 1q4 5.500 0 11" /></Svg>
      </TrayItem>
      <TrayItem $w={36}>CAT</TrayItem>
      <TrayItem $w={64}><span>12:56<br />10/12/2023</span></TrayItem>
      <TrayItem $w={41} aria-label="Notifications">
        <Svg w={16}><path d="M0 0h16v13h-5l-3 3-3-3H0z" fill="#fff" stroke="none" /><path d="M3 3.500h10M3 6.500h10M3 9.500h6" stroke="#1c1c1c" /></Svg>
      </TrayItem>
      <ShowDesktop aria-label="Show desktop" />
    </Tray>
  </Taskbar>
);

export default function App() {
  return (
    <Desktop>
      <Global />
      <TitleRow>
        <UnityBadge />05JetTurbine2023 - SampleScene - Android - Unity 2023.1.14f1 &lt;DX11&gt;
        <Controls tone="#909090" restore />
      </TitleRow>
      <MenuRow>
        {["File", "Edit", "Assets", "GameObject", "Component", "Services", "Window", "Help"].map((m) => (
          <button key={m}>{m}</button>
        ))}
      </MenuRow>
      <MainBar>
        <BarButton $w={56}><UserIcon /><span>&nbsp;JF&nbsp;</span><Caret /></BarButton>
        <BarButton $w={30} aria-label="Cloud services"><CloudIcon /></BarButton>
        <BarButton $w={101}><BagIcon /><span>Asset Store</span><Caret /></BarButton>
        <BarButton $w={30} aria-label="Version control"><HexIcon /></BarButton>
        <Spacer />
        <BarButton $w={30} aria-label="Undo history"><HistoryIcon /></BarButton>
        <BarButton $w={30} aria-label="Search"><SearchIcon w={12} /></BarButton>
        <BarSelect name="Layers" />
        <BarSelect name="Layout" />
      </MainBar>

      <Workspace>
        <Column>
          <TabStrip><Tab $active $w={76}><HashIcon />Scene</Tab></TabStrip>
          <SceneToolbar>
            <Grip />
            <SceneButton $w={75}><PivotIcon />Center<Caret /></SceneButton>
            <SceneButton $w={72}><GlobeIcon />Global<Caret /></SceneButton>
            <Grip $ml={6} />
            <Joined>
              <SceneButton $on $w={22} aria-label="Grid axis"><GridYIcon /></SceneButton>
              <SceneButton $on $w={14} aria-label="Grid options"><Caret /></SceneButton>
            </Joined>
            <Joined>
              <SceneButton $w={22} aria-label="Snapping"><SnapIcon /></SceneButton>
              <SceneButton $w={14} aria-label="Snapping options"><Caret /></SceneButton>
            </Joined>
            <SceneButton $w={36} aria-label="Snap increment"><IncrementIcon /><Caret /></SceneButton>
          </SceneToolbar>
          <SceneView>
            <FloorGrid />
            <ToolPalette>
              <PaletteGrip />
              <ToolButton aria-label="View"><HandIcon /></ToolButton>
              <ToolButton $on aria-label="Move"><MoveIcon /></ToolButton>
              <ToolButton aria-label="Rotate"><RotateIcon /></ToolButton>
              <ToolButton aria-label="Scale"><ScaleIcon /></ToolButton>
              <ToolButton aria-label="Rect"><RectIcon /></ToolButton>
              <ToolButton aria-label="Transform"><TransformIcon /></ToolButton>
            </ToolPalette>
          </SceneView>
          <ConsolePanel>
            <TabStrip>
              <Tab $active $w={86}><ConsoleIcon />Console</Tab>
              <Tab><GamepadIcon />Game</Tab>
            </TabStrip>
            <ConsoleToolbar>
              <ConsoleButton $w={40}>Clear</ConsoleButton>
              <ConsoleButton $w={18} aria-label="Clear options"><Caret /></ConsoleButton>
              <ConsoleButton $w={60}>Collapse</ConsoleButton>
              <ConsoleButton $w={76}>Error Pause</ConsoleButton>
              <ConsoleButton $w={53}>Editor<Caret /></ConsoleButton>
            </ConsoleToolbar>
            <ConsoleBody />
            <ConsoleDetail />
          </ConsolePanel>
        </Column>

        <Column>
          <TabStrip><StripTools><LockIcon /><Kebab /></StripTools></TabStrip>
          <BrowserToolbar>
            <AssetSearch><SearchMenuIcon /><input aria-label="Search assets" placeholder="All" /></AssetSearch>
            <PopOut aria-label="Open search"><PopOutIcon /></PopOut>
          </BrowserToolbar>
          <BrowserSplit>
            <FolderPane />
            <AssetPane>
              <ZoomBar><Range aria-label="Icon size" min={0} max={10} defaultValue={0} style={{ width: 55 }} /></ZoomBar>
            </AssetPane>
          </BrowserSplit>
        </Column>

        <Column>
          <TabStrip>
            <Tab $active $w={96}><InfoIcon />Inspector</Tab>
            <StripTools><LockIcon /><Kebab /></StripTools>
          </TabStrip>
        </Column>
      </Workspace>

      <EditorTray />
      <WindowsTaskbar />

      <BuildWindow />
      <ProjectWindow />

      <Pointer width="394" height="270" viewBox="0 0 394 270" aria-hidden="true">
        <path d="M390 4L16 256" stroke="#fff" strokeWidth="2" />
        <path d="M2 265L13 249l8 9z" fill="#fff" />
      </Pointer>
    </Desktop>
  );
}
